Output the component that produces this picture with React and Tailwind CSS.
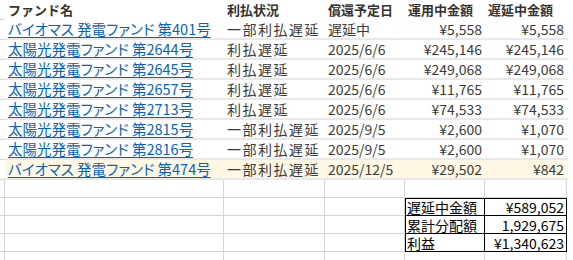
const rows = [
  { name: 'バイオマス 発電ファンド 第401号', status: '一部利払遅延', date: '遅延中', op: '¥5,558', late: '¥5,558' },
  { name: '太陽光発電ファンド 第2644号', status: '利払遅延', date: '2025/6/6', op: '¥245,146', late: '¥245,146' },
  { name: '太陽光発電ファンド 第2645号', status: '利払遅延', date: '2025/6/6', op: '¥249,068', late: '¥249,068' },
  { name: '太陽光発電ファンド 第2657号', status: '利払遅延', date: '2025/6/6', op: '¥11,765', late: '¥11,765' },
  { name: '太陽光発電ファンド 第2713号', status: '利払遅延', date: '2025/6/6', op: '¥74,533', late: '¥74,533' },
  { name: '太陽光発電ファンド 第2815号', status: '一部利払遅延', date: '2025/9/5', op: '¥2,600', late: '¥1,070' },
  { name: '太陽光発電ファンド 第2816号', status: '一部利払遅延', date: '2025/9/5', op: '¥2,600', late: '¥1,070' },
  { name: 'バイオマス 発電ファンド 第474号', status: '一部利払遅延', date: '2025/12/5', op: '¥29,502', late: '¥842', hl: true },
];

const summary = [
  ['遅延中金額', '¥589,052'],
  ['累計分配額', '1,929,675'],
  ['利益', '¥1,340,623'],
];

function HeaderRow() {
  return (
    <div className="flex h-[20px] items-center text-[13px] font-bold text-[#333]">
      <div className="w-[5px] self-stretch border-b border-[#d4d4d4]" />
      <div className="w-[219px] pl-[3px]">ファンド名</div>
      <div className="w-[101px] pl-[3px]">利払状況</div>
      <div className="w-[80px] pl-[3px]">償還予定日</div>
      <div className="w-[80px] pl-[3px]">運用中金額</div>
      <div className="w-[82px] pl-[3px]">遅延中金額</div>
    </div>
  );
}

function DataRow({ r }) {
  return (
    <div className="flex h-[20px]">
      <div className="w-[5px] border-b border-[#d4d4d4]" />
      <div
        className={`flex w-[563px] items-center border-b-2 border-[#e8e8e8] text-[14px] text-[#3b3b3b] ${r.hl ? 'bg-[#fdf7e4]' : 'bg-white'}`}
      >
        <div className="w-[219px] whitespace-nowrap pl-[3px] text-[14.5px] text-[#0563c1] underline underline-offset-2 [font-feature-settings:'palt']">
          {r.name}
        </div>
        <div className="w-[101px] whitespace-nowrap pl-[3px] tracking-[1.5px]">{r.status}</div>
        <div className="w-[80px] whitespace-nowrap pl-[3px]">{r.date}</div>
        <div className="w-[80px] pr-[3px] text-right">{r.op}</div>
        <div className="w-[82px] pr-[3px] text-right">{r.late}</div>
      </div>
    </div>
  );
}

function GridRow({ sum, first }) {
  return (
    <div className="flex h-[18px]">
      <div className="w-[5px] border-r border-b border-[#d4d4d4]" />
      <div className="w-[219px] border-r border-b border-[#d4d4d4]" />
      <div className="w-[101px] border-r border-b border-[#d4d4d4]" />
      <div className="w-[80px] border-r border-b border-[#d4d4d4]" />
      {sum ? (
        <div className="flex text-[14px] leading-none text-black">
          <div className={`flex w-[80px] items-center whitespace-nowrap border-x border-b border-black pl-[1px] ${first ? 'border-t' : ''}`}>
            {sum[0]}
          </div>
          <div className={`flex w-[82px] items-center justify-end whitespace-nowrap border-r border-b border-black pr-[2px] ${first ? 'border-t' : ''}`}>
            {sum[1]}
          </div>
        </div>
      ) : (
        <div className="flex">
          <div className="w-[80px] border-r border-b border-[#d4d4d4]" />
          <div className="w-[82px] border-r border-b border-[#d4d4d4]" />
        </div>
      )}
    </div>
  );
}

export default function App() {
  return (
    <div
      className="h-[260px] w-[573px] overflow-hidden bg-white"
      style={{ fontFamily: '"Noto Sans CJK JP", "Noto Sans", sans-serif' }}
    >
      <HeaderRow />
      {rows.map((r) => (
        <DataRow key={r.name} r={r} />
      ))}
      <GridRow />
      <GridRow sum={summary[0]} first />
      <GridRow sum={summary[1]} />
      <GridRow sum={summary[2]} />
      <GridRow />
    </div>
  );
}
